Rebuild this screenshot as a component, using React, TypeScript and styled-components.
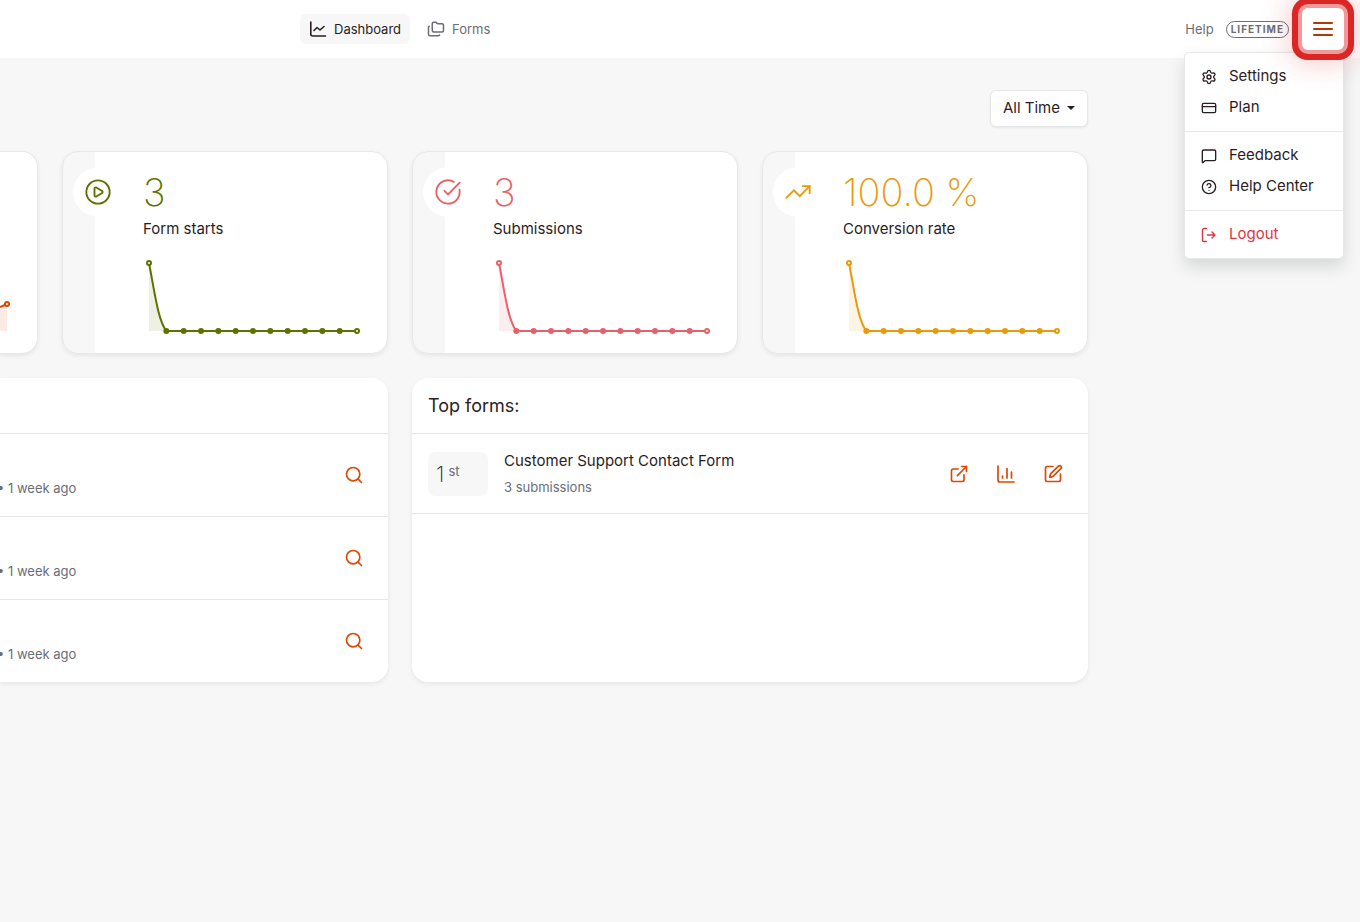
import React from "react";
import styled, { createGlobalStyle } from "styled-components";
import {
  CircleCheckBig,
  CircleHelp,
  CirclePlay,
  CreditCard,
  ExternalLink,
  Folders,
  MessageSquare,
  Search,
  Settings,
  SquarePen,
  TrendingUp,
} from "lucide-react";

const ink = "#2b1d23";
const muted = "#6b6d75";
const accent = "#d94a05";
const line = "#e6e7e8";
const canvas = "#f7f7f7";

const GlobalStyle = createGlobalStyle`
  *, *::before, *::after { box-sizing: border-box; }
  body {
    margin: 0;
    background: ${canvas};
    color: ${ink};
    font-family: Inter, "Liberation Sans", sans-serif;
    font-size: 15px;
    line-height: 24px;
  }
  button { font: inherit; color: inherit; cursor: pointer; }
  a { color: inherit; text-decoration: none; }
  h2, p, ul, ol { margin: 0; padding: 0; font-weight: 400; }
  ul, ol { list-style: none; }
  svg { display: block; flex: none; }
`;

const Page = styled.div`
  min-height: 100vh;
  overflow-x: hidden;
`;

const Header = styled.header`
  display: flex;
  align-items: center;
  justify-content: space-between;
  height: 58px;
  padding: 0 16px 0 300px;
  background: #fff;
`;

const Nav = styled.nav`
  display: flex;
  gap: 8px;
`;

const NavLink = styled.a<{ $active?: boolean }>`
  display: flex;
  align-items: center;
  gap: 7px;
  height: 30px;
  padding: 0 9px;
  border-radius: 6px;
  font-size: 13px;
  color: ${(p) => (p.$active ? ink : muted)};
  background: ${(p) => (p.$active ? canvas : "transparent")};
`;

const Account = styled.div`
  position: relative;
  display: flex;
  align-items: center;
`;

const HelpLink = styled.a`
  margin-right: 12px;
  font-size: 13px;
  color: ${muted};
`;

const Badge = styled.span`
  margin-right: 13px;
  padding: 0 4px;
  border: 1px solid ${muted};
  border-radius: 9px;
  font-size: 10px;
  line-height: 15px;
  font-weight: 700;
  letter-spacing: 1px;
  color: ${muted};
`;

const MenuButton = styled.button`
  position: relative;
  z-index: 3;
  display: grid;
  place-items: center;
  width: 42px;
  height: 42px;
  padding: 0;
  border: 0;
  border-radius: 6px;
  background: #fff;
  color: #b23a00;
  box-shadow:
    0 0 0 4px #ee9a9a,
    0 0 0 10px #dc2626,
    0 0 30px 10px rgba(220, 38, 38, 0.3);
`;

const Menu = styled.div`
  position: absolute;
  z-index: 2;
  top: 44px;
  right: 0;
  width: 160px;
  padding: 8px 0;
  border: 1px solid ${line};
  border-radius: 5px;
  background: #fff;
  box-shadow: 0 8px 16px rgba(33, 37, 41, 0.15);
`;

const MenuGroup = styled.ul`
  & + & {
    margin-top: 8px;
    padding-top: 8px;
    border-top: 1px solid ${line};
  }
`;

const MenuItem = styled.a<{ $danger?: boolean }>`
  display: flex;
  align-items: center;
  gap: 12px;
  height: 31px;
  padding: 0 16px;
  color: ${(p) => (p.$danger ? "#dc3545" : ink)};
`;

const MenuLabel = styled.span`
  padding-bottom: 2px;
`;

const Main = styled.main`
  display: flex;
  flex-direction: column;
  gap: 24px;
  padding: 32px 20% 32px 0;
`;

const PeriodButton = styled.button`
  display: flex;
  align-items: center;
  align-self: flex-end;
  gap: 7px;
  height: 37px;
  padding: 0 12px 2px;
  border: 1px solid ${line};
  border-radius: 6px;
  background: #fff;
  box-shadow: 0 1px 2px rgba(33, 37, 41, 0.08);
`;

const Caret = styled.span`
  border: 4px solid transparent;
  border-top-color: ${ink};
  border-bottom: 0;
`;

const Board = styled.div`
  display: grid;
  grid-template-columns: 38px repeat(3, minmax(0, 1fr));
  gap: 24px;
`;

const Surface = styled.section`
  background: #fff;
  border-radius: 16px;
  box-shadow: 0 2px 4px rgba(33, 37, 41, 0.08);
`;

const StatCard = styled(Surface)`
  display: flex;
  gap: 20px;
  height: 203px;
  padding: 15px 24px 15px 10px;
  border: 1px solid ${line};
  background: linear-gradient(to right, ${canvas} 32px, #fff 32px);
`;

const EdgeCard = styled(Surface)`
  height: 203px;
  padding-top: 143px;
  border: 1px solid ${line};
  border-left: 0;
  border-radius: 0 16px 16px 0;
`;

const StatIcon = styled.div<{ $color: string }>`
  display: grid;
  flex: none;
  place-items: center;
  width: 50px;
  height: 50px;
  border-radius: 50%;
  background: #fff;
  color: ${(p) => p.$color};
`;

const StatBody = styled.div`
  flex: 1;
  min-width: 0;
`;

const StatValue = styled.p<{ $color: string }>`
  font-size: 38px;
  line-height: 50px;
  font-weight: 200;
  color: ${(p) => p.$color};
`;

const Chart = styled.svg`
  width: 100%;
  margin-top: 16px;
`;

const Panel = styled(Surface)<{ $edge?: boolean }>`
  grid-column: span 2;
  min-height: 304px;
  border-radius: ${(p) => (p.$edge ? "0 16px 16px 0" : "16px")};
`;

const PanelHeader = styled.div`
  height: 56px;
  padding: 16px;
  border-bottom: 1px solid ${line};
`;

const PanelTitle = styled.h2`
  font-size: 18px;
  line-height: 24px;
`;

const ActivityRow = styled.li`
  display: flex;
  align-items: center;
  justify-content: space-between;
  height: 83px;
  padding-right: 24px;
  border-bottom: 1px solid ${line};
  &:last-child {
    height: 82px;
    border-bottom: 0;
  }
`;

const ActivityTime = styled.p`
  align-self: flex-end;
  margin-left: -3px;
  padding-bottom: 16px;
  font-size: 13px;
  color: ${muted};
`;

const FormRow = styled.li`
  display: flex;
  align-items: center;
  gap: 16px;
  height: 80px;
  padding: 0 25px 0 16px;
  border-bottom: 1px solid ${line};
`;

const Rank = styled.div`
  display: flex;
  align-items: center;
  gap: 4px;
  width: 60px;
  height: 44px;
  padding: 0 8px;
  border-radius: 8px;
  background: ${canvas};
  font-size: 22px;
  font-weight: 200;
  color: ${ink};
`;

const RankSuffix = styled.span`
  padding-bottom: 6px;
  font-size: 13px;
  line-height: 16px;
  font-weight: 400;
  color: ${muted};
`;

const FormInfo = styled.div`
  display: flex;
  flex: 1;
  flex-direction: column;
  gap: 2px;
`;

const FormMeta = styled.p`
  font-size: 13px;
  color: ${muted};
`;

const Actions = styled.div`
  display: flex;
  gap: 27px;
`;

const IconButton = styled.button`
  padding: 0;
  border: 0;
  background: none;
  color: ${accent};
`;

const stroke = {
  fill: "none",
  stroke: "currentColor",
  strokeLinecap: "round" as const,
  strokeLinejoin: "round" as const,
};

const GraphIcon = () => (
  <svg width="18" height="18" viewBox="0 0 18 18" strokeWidth="1.6" {...stroke}>
    <path d="M1.8 2v12a2 2 0 0 0 2 2H16.500" />
    <path d="M5 10.500 8 7.500l3 2.500 4-3.500" />
  </svg>
);

const BarsIcon = () => (
  <svg width="20" height="20" viewBox="0 0 20 20" strokeWidth="1.7" {...stroke}>
    <path d="M2 2v14a2 2 0 0 0 2 2h14M6.5 12v2M11 4.5V14M15.500 8v6" />
  </svg>
);

const LogoutIcon = () => (
  <svg width="16" height="16" viewBox="0 0 16 16" strokeWidth="1.4" {...stroke}>
    <path d="M5.500 1.5H3A1.500 1.500 0 0 0 1.500 3v10A1.500 1.500 0 0 0 3 14.500h2.500" />
    <path d="M6.500 8H14M11 5l3 3-3 3" />
  </svg>
);

const BurgerIcon = () => (
  <svg width="22" height="16" viewBox="0 0 22 16" strokeWidth="2" {...stroke}>
    <path d="M2 2h18M2 8h18M2 14h18" />
  </svg>
);

const STEP = 208 / 12;

function Sparkline({ color }: { color: string }) {
  const xs = Array.from({ length: 13 }, (_, i) => 6 + i * STEP);
  return (
    <Chart viewBox="0 0 220 80" aria-hidden="true">
      <path d={`M6 6C12 37 15 63 ${xs[1]} 74H6Z`} fill={color} opacity="0.11" />
      <path
        d={`M6 6C12 37 15 63 ${xs[1]} 74H214`}
        fill="none"
        stroke={color}
        strokeWidth="2"
      />
      {xs.map((x, i) => (
        <circle
          key={i}
          cx={x}
          cy={i === 0 ? 6 : 74}
          r="2"
          fill={i === 0 || i === 12 ? "#fff" : color}
          stroke={color}
          strokeWidth="2"
        />
      ))}
    </Chart>
  );
}

const stats = [
  { label: "Form starts", value: "3", color: "#5f7200", Icon: CirclePlay },
  { label: "Submissions", value: "3", color: "#e8606b", Icon: CircleCheckBig },
  { label: "Conversion rate", value: "100.0 %", color: "#e99a0c", Icon: TrendingUp },
];

const menuGroups = [
  [
    { label: "Settings", href: "#settings", icon: <Settings size={16} /> },
    { label: "Plan", href: "#plan", icon: <CreditCard size={16} /> },
  ],
  [
    { label: "Feedback", href: "#feedback", icon: <MessageSquare size={16} /> },
    { label: "Help Center", href: "#help-center", icon: <CircleHelp size={16} /> },
  ],
  [{ label: "Logout", href: "#logout", icon: <LogoutIcon />, danger: true }],
];

export default function App() {
  return (
    <Page>
      <GlobalStyle />
      <Header>
        <Nav>
          <NavLink href="#dashboard" $active>
            <GraphIcon />
            Dashboard
          </NavLink>
          <NavLink href="#forms">
            <Folders size={18} />
            Forms
          </NavLink>
        </Nav>
        <Account>
          <HelpLink href="#help">Help</HelpLink>
          <Badge>LIFETIME</Badge>
          <MenuButton aria-label="Menu" aria-expanded="true">
            <BurgerIcon />
          </MenuButton>
          <Menu>
            {menuGroups.map((group) => (
              <MenuGroup key={group[0].label}>
                {group.map((item) => (
                  <li key={item.label}>
                    <MenuItem href={item.href} $danger={"danger" in item}>
                      {item.icon}
                      <MenuLabel>{item.label}</MenuLabel>
                    </MenuItem>
                  </li>
                ))}
              </MenuGroup>
            ))}
          </Menu>
        </Account>
      </Header>
      <Main>
        <PeriodButton>
          All Time
          <Caret />
        </PeriodButton>
        <Board>
          <EdgeCard>
            <svg width="20" height="40" viewBox="0 0 20 40" aria-hidden="true">
              <path d="M0 11 7 9v27H0Z" fill={accent} opacity="0.11" />
              <path d="M0 12 7 9" stroke={accent} strokeWidth="2" />
              <circle cx="7" cy="9" r="2" fill="#fff" stroke={accent} strokeWidth="2" />
            </svg>
          </EdgeCard>
          {stats.map(({ label, value, color, Icon }) => (
            <StatCard key={label}>
              <StatIcon $color={color}>
                <Icon size={28} strokeWidth={1.6} strokeLinejoin="miter" />
              </StatIcon>
              <StatBody>
                <StatValue $color={color}>{value}</StatValue>
                <p>{label}</p>
                <Sparkline color={color} />
              </StatBody>
            </StatCard>
          ))}
          <Panel $edge>
            <PanelHeader />
            <ul>
              {[0, 1, 2].map((row) => (
                <ActivityRow key={row}>
                  <ActivityTime>• 1 week ago</ActivityTime>
                  <IconButton aria-label="View submission">
                    <Search size={20} />
                  </IconButton>
                </ActivityRow>
              ))}
            </ul>
          </Panel>
          <Panel>
            <PanelHeader>
              <PanelTitle>Top forms:</PanelTitle>
            </PanelHeader>
            <ol>
              <FormRow>
                <Rank>
                  1<RankSuffix>st</RankSuffix>
                </Rank>
                <FormInfo>
                  <p>Customer Support Contact Form</p>
                  <FormMeta>3 submissions</FormMeta>
                </FormInfo>
                <Actions>
                  <IconButton aria-label="Open form"><ExternalLink size={20} /></IconButton>
                  <IconButton aria-label="Statistics"><BarsIcon /></IconButton>
                  <IconButton aria-label="Edit form"><SquarePen size={20} /></IconButton>
                </Actions>
              </FormRow>
            </ol>
          </Panel>
        </Board>
      </Main>
    </Page>
  );
}
